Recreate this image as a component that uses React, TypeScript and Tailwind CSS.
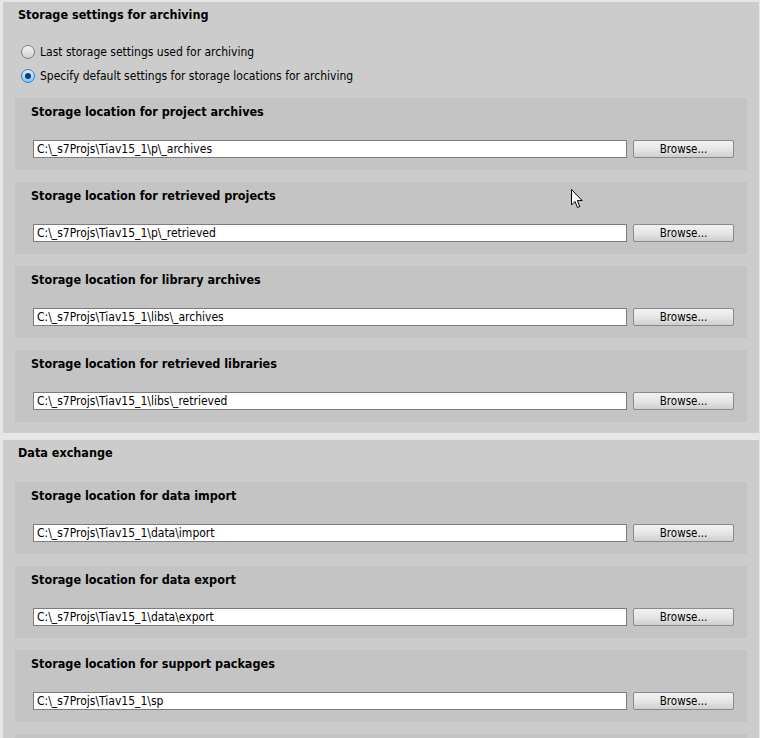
const archiveBoxes = [
  { title: 'Storage location for project archives', path: 'C:\\_s7Projs\\Tiav15_1\\p\\_archives' },
  { title: 'Storage location for retrieved projects', path: 'C:\\_s7Projs\\Tiav15_1\\p\\_retrieved' },
  { title: 'Storage location for library archives', path: 'C:\\_s7Projs\\Tiav15_1\\libs\\_archives' },
  { title: 'Storage location for retrieved libraries', path: 'C:\\_s7Projs\\Tiav15_1\\libs\\_retrieved' },
]

const exchangeBoxes = [
  { title: 'Storage location for data import', path: 'C:\\_s7Projs\\Tiav15_1\\data\\import' },
  { title: 'Storage location for data export', path: 'C:\\_s7Projs\\Tiav15_1\\data\\export' },
  { title: 'Storage location for support packages', path: 'C:\\_s7Projs\\Tiav15_1\\sp' },
]

function LocationBox({ title, path }: { title: string; path: string }) {
  return (
    <div className="bg-[#c4c4c4] h-[72px] shrink-0 mr-[12px] pl-[16px] pt-[7px]">
      <div className="h-[14px] leading-[14px] text-[12.5px] font-bold text-black">{title}</div>
      <div className="flex items-center mt-[21px]">
        <div className="ml-[2px] w-[594px] h-[18px] bg-white border border-[#7c7c7c] pl-[3px] text-[12px] leading-[16px] text-black truncate">
          {path}
        </div>
        <button className="ml-[6px] w-[101px] h-[18px] border border-[#8a8a8a] rounded-[2px] bg-gradient-to-b from-[#f2f2f2] via-[#e6e6e6] to-[#cfcfcf] text-[11.5px] leading-[16px] text-black">
          Browse...
        </button>
      </div>
    </div>
  )
}

function Radio({ checked, label }: { checked?: boolean; label: string }) {
  return (
    <div className="flex items-center h-[24px]">
      {checked ? (
        <span className="w-[14px] h-[14px] rounded-full border border-[#2f7fc8] bg-gradient-to-b from-[#d9efff] to-[#7ec3f2] flex items-center justify-center">
          <span className="w-[6px] h-[6px] rounded-full bg-[#0d3f80]" />
        </span>
      ) : (
        <span className="w-[14px] h-[14px] rounded-full border border-[#7d7d7d] bg-gradient-to-b from-[#f4f4f4] to-[#cfcfcf]" />
      )}
      <span className="ml-[5px] text-[12px] text-black">{label}</span>
    </div>
  )
}

function Cursor() {
  return (
    <svg className="absolute left-[571px] top-[189px]" width="13" height="20" viewBox="0 0 13 20">
      <path d="M0.5 0.5 L0.5 16 L4 12.5 L6.5 18.5 L8.8 17.5 L6.3 11.6 L11.2 11.6 Z" fill="white" stroke="black" strokeWidth="1" strokeLinejoin="miter" />
    </svg>
  )
}

export default function App() {
  return (
    <div
      className="relative w-[760px] h-[738px] overflow-hidden bg-[#e6e6e6] pl-[3px] pt-[2px] pr-[1px]"
      style={{ fontFamily: 'Tahoma, "DejaVu Sans Condensed", "Liberation Sans", sans-serif' }}
    >
      <div className="bg-[#cccccc] h-[431px] flex flex-col">
        <div className="h-[26px] leading-[26px] pl-[15px] text-[12.5px] font-bold text-black">Storage settings for archiving</div>
        <div className="pl-[18px] pt-[12px]">
          <Radio label="Last storage settings used for archiving" />
          <Radio checked label="Specify default settings for storage locations for archiving" />
        </div>
        <div className="flex flex-col gap-[12px] pl-[12px] mt-[10px]">
          {archiveBoxes.map((b) => (
            <LocationBox key={b.title} {...b} />
          ))}
        </div>
      </div>
      <div className="bg-[#cccccc] mt-[7px] h-[400px] flex flex-col">
        <div className="h-[26px] leading-[26px] pl-[15px] text-[12.5px] font-bold text-black">Data exchange</div>
        <div className="flex flex-col gap-[12px] pl-[12px] mt-[16px]">
          {exchangeBoxes.map((b) => (
            <LocationBox key={b.title} {...b} />
          ))}
          <div className="bg-[#c4c4c4] h-[72px] shrink-0 mr-[12px]" />
        </div>
      </div>
      <Cursor />
    </div>
  )
}
